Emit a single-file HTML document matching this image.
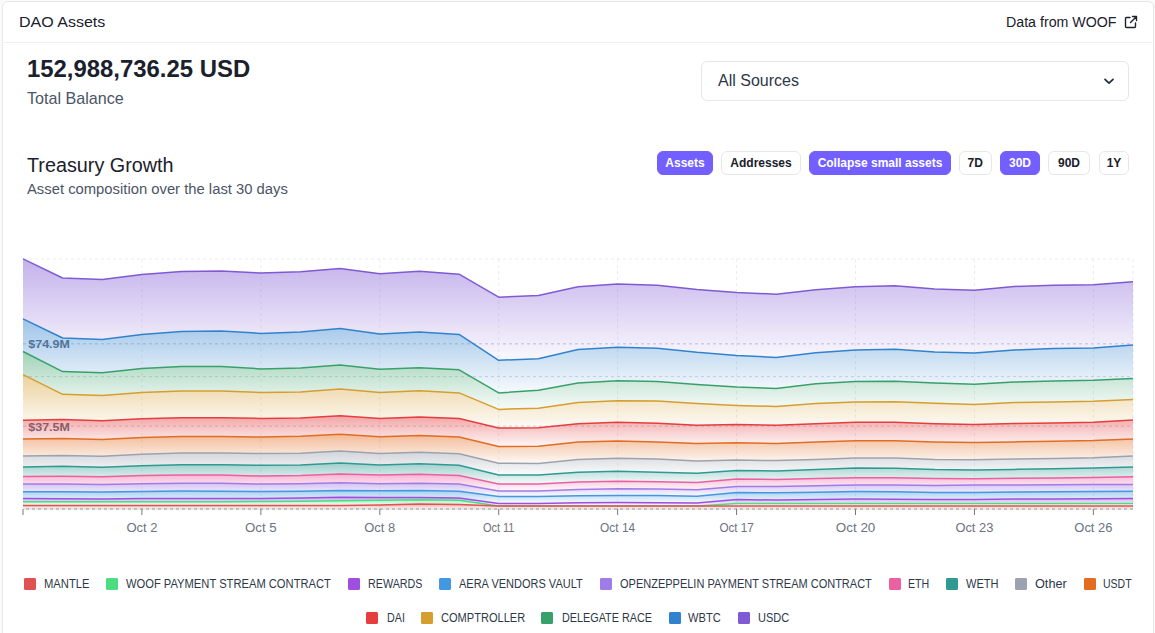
<!DOCTYPE html>
<html><head><meta charset="utf-8"><style>
*{box-sizing:border-box;margin:0;padding:0}
html,body{width:1155px;height:633px;overflow:hidden;background:#fafafa;font-family:"Liberation Sans",sans-serif;}
.card{position:absolute;left:2px;top:1px;width:1152px;height:700px;border:1px solid #e5e7eb;border-radius:6px;background:#fff}
.hdr{position:absolute;left:2px;top:42px;width:1152px;height:1px;background:#edf0f4}
.abs{position:absolute;white-space:nowrap}
.chart{position:absolute;left:0;top:0}
.btn{position:absolute;top:151px;height:24px;border-radius:6px;font-weight:bold;font-size:12px;line-height:22px;text-align:center;color:#1a202c;border:1px solid #e5e7eb;background:#fff}
.btn.on{background:#735fff;border-color:#735fff;color:#fff}
.sq{position:absolute;width:12px;height:12px;border-radius:2px}
.lt{position:absolute;font-size:12.5px;line-height:16px;color:#2d3748;transform-origin:0 0;white-space:nowrap}
</style></head><body>
<div class="card"></div>
<div class="hdr"></div>
<div class="abs" style="left:18.7px;top:12.9px;font-size:14.7px;line-height:18px;color:#1a202c;transform:scaleX(1.09);transform-origin:0 0">DAO Assets</div>
<div class="abs" style="left:1006.3px;top:14px;font-size:14px;line-height:17px;color:#1a202c;transform:scaleX(1.015);transform-origin:0 0">Data from WOOF</div>
<svg class="abs" style="left:1124px;top:15px" width="14" height="14" viewBox="0 0 14 14"><path d="M6 2.5H2.5a1 1 0 0 0-1 1v8a1 1 0 0 0 1 1h8a1 1 0 0 0 1-1V8" fill="none" stroke="#1a202c" stroke-width="1.4" stroke-linecap="round"/><path d="M8.5 1.5h4v4M12.5 1.5L6.5 7.5" fill="none" stroke="#1a202c" stroke-width="1.4" stroke-linecap="round" stroke-linejoin="round"/></svg>
<div class="abs" style="left:27px;top:55px;font-size:23.9px;line-height:28px;font-weight:bold;color:#1a202c">152,988,736.25 USD</div>
<div class="abs" style="left:27px;top:89px;font-size:16.1px;line-height:19px;color:#4a5568">Total Balance</div>
<div class="abs" style="left:701px;top:61px;width:428px;height:40px;border:1px solid #e5e7eb;border-radius:6px"></div>
<div class="abs" style="left:718px;top:71px;font-size:16px;line-height:19px;color:#2d3748">All Sources</div>
<svg class="abs" style="left:1103px;top:75px" width="12" height="12" viewBox="0 0 12 12"><path d="M2 4.4L6 8.2L10 4.4" fill="none" stroke="#1e293b" stroke-width="1.7" stroke-linecap="round" stroke-linejoin="round"/></svg>
<div class="abs" style="left:27.4px;top:154px;font-size:19.6px;line-height:22px;color:#1a202c;transform:scaleX(1.01);transform-origin:0 0">Treasury Growth</div>
<div class="abs" style="left:27.3px;top:181px;font-size:14.7px;line-height:17px;color:#4a5568;transform:scaleX(1.008);transform-origin:0 0">Asset composition over the last 30 days</div>
<div class="btn on" style="left:657px;width:56px">Assets</div>
<div class="btn" style="left:721px;width:80px">Addresses</div>
<div class="btn on" style="left:809px;width:142px">Collapse small assets</div>
<div class="btn" style="left:959px;width:32.5px">7D</div>
<div class="btn on" style="left:1000px;width:40px">30D</div>
<div class="btn" style="left:1048px;width:42px">90D</div>
<div class="btn" style="left:1099px;width:30px">1Y</div>
<svg class="chart" width="1155" height="633" viewBox="0 0 1155 633">
<defs><linearGradient id="g0" x1="0" y1="0" x2="0" y2="1"><stop offset="5%" stop-color="#e05252" stop-opacity="0.45"/><stop offset="95%" stop-color="#e05252" stop-opacity="0.06"/></linearGradient><linearGradient id="g1" x1="0" y1="0" x2="0" y2="1"><stop offset="5%" stop-color="#4ade80" stop-opacity="0.45"/><stop offset="95%" stop-color="#4ade80" stop-opacity="0.06"/></linearGradient><linearGradient id="g2" x1="0" y1="0" x2="0" y2="1"><stop offset="5%" stop-color="#9f4fe0" stop-opacity="0.45"/><stop offset="95%" stop-color="#9f4fe0" stop-opacity="0.06"/></linearGradient><linearGradient id="g3" x1="0" y1="0" x2="0" y2="1"><stop offset="5%" stop-color="#4299e1" stop-opacity="0.45"/><stop offset="95%" stop-color="#4299e1" stop-opacity="0.06"/></linearGradient><linearGradient id="g4" x1="0" y1="0" x2="0" y2="1"><stop offset="5%" stop-color="#a07ce8" stop-opacity="0.45"/><stop offset="95%" stop-color="#a07ce8" stop-opacity="0.06"/></linearGradient><linearGradient id="g5" x1="0" y1="0" x2="0" y2="1"><stop offset="5%" stop-color="#ec5fa0" stop-opacity="0.45"/><stop offset="95%" stop-color="#ec5fa0" stop-opacity="0.06"/></linearGradient><linearGradient id="g6" x1="0" y1="0" x2="0" y2="1"><stop offset="5%" stop-color="#2f9a92" stop-opacity="0.45"/><stop offset="95%" stop-color="#2f9a92" stop-opacity="0.06"/></linearGradient><linearGradient id="g7" x1="0" y1="0" x2="0" y2="1"><stop offset="5%" stop-color="#9ca3af" stop-opacity="0.45"/><stop offset="95%" stop-color="#9ca3af" stop-opacity="0.06"/></linearGradient><linearGradient id="g8" x1="0" y1="0" x2="0" y2="1"><stop offset="5%" stop-color="#e36c20" stop-opacity="0.45"/><stop offset="95%" stop-color="#e36c20" stop-opacity="0.06"/></linearGradient><linearGradient id="g9" x1="0" y1="0" x2="0" y2="1"><stop offset="5%" stop-color="#e53e3e" stop-opacity="0.45"/><stop offset="95%" stop-color="#e53e3e" stop-opacity="0.06"/></linearGradient><linearGradient id="g10" x1="0" y1="0" x2="0" y2="1"><stop offset="5%" stop-color="#d69e2e" stop-opacity="0.45"/><stop offset="95%" stop-color="#d69e2e" stop-opacity="0.06"/></linearGradient><linearGradient id="g11" x1="0" y1="0" x2="0" y2="1"><stop offset="5%" stop-color="#38a169" stop-opacity="0.45"/><stop offset="95%" stop-color="#38a169" stop-opacity="0.06"/></linearGradient><linearGradient id="g12" x1="0" y1="0" x2="0" y2="1"><stop offset="5%" stop-color="#3182ce" stop-opacity="0.45"/><stop offset="95%" stop-color="#3182ce" stop-opacity="0.06"/></linearGradient><linearGradient id="g13" x1="0" y1="0" x2="0" y2="1"><stop offset="5%" stop-color="#805ad5" stop-opacity="0.45"/><stop offset="95%" stop-color="#805ad5" stop-opacity="0.06"/></linearGradient></defs>
<g><line x1="23" y1="259" x2="1133" y2="259" stroke="#ebebee" stroke-width="1.2" stroke-dasharray="3 3"/><line x1="23" y1="343.8" x2="1133" y2="343.8" stroke="#d6d8e8" stroke-width="1.5" stroke-dasharray="3 3"/><line x1="23" y1="376.6" x2="1133" y2="376.6" stroke="#d6d8e8" stroke-width="1.0" stroke-dasharray="3 3"/><line x1="23" y1="426.2" x2="1133" y2="426.2" stroke="#d6d8e8" stroke-width="1.2" stroke-dasharray="3 3"/><line x1="141.93" y1="259" x2="141.93" y2="509" stroke="#ececec" stroke-width="1" stroke-dasharray="3 3"/><line x1="260.86" y1="259" x2="260.86" y2="509" stroke="#ececec" stroke-width="1" stroke-dasharray="3 3"/><line x1="379.79" y1="259" x2="379.79" y2="509" stroke="#ececec" stroke-width="1" stroke-dasharray="3 3"/><line x1="498.71" y1="259" x2="498.71" y2="509" stroke="#ececec" stroke-width="1" stroke-dasharray="3 3"/><line x1="617.64" y1="259" x2="617.64" y2="509" stroke="#ececec" stroke-width="1" stroke-dasharray="3 3"/><line x1="736.57" y1="259" x2="736.57" y2="509" stroke="#ececec" stroke-width="1" stroke-dasharray="3 3"/><line x1="855.50" y1="259" x2="855.50" y2="509" stroke="#ececec" stroke-width="1" stroke-dasharray="3 3"/><line x1="974.43" y1="259" x2="974.43" y2="509" stroke="#ececec" stroke-width="1" stroke-dasharray="3 3"/><line x1="1093.36" y1="259" x2="1093.36" y2="509" stroke="#ececec" stroke-width="1" stroke-dasharray="3 3"/><line x1="1133.00" y1="259" x2="1133.00" y2="509" stroke="#ececec" stroke-width="1" stroke-dasharray="3 3"/></g>
<g font-family="Liberation Sans, sans-serif" font-size="11.5" font-weight="bold" fill="#5f6b7d" fill-opacity="1"><text x="28.3" y="348" textLength="41.5" lengthAdjust="spacingAndGlyphs">$74.9M</text><text x="28.3" y="431" textLength="41.5" lengthAdjust="spacingAndGlyphs">$37.5M</text></g>
<g><polygon points="23.0,505.4 62.6,505.4 102.3,505.4 141.9,505.4 181.6,505.4 221.2,505.4 260.9,505.4 300.5,505.4 340.1,505.4 379.8,505.0 419.4,504.1 459.1,504.4 498.7,506.0 538.4,506.0 578.0,506.0 617.6,506.0 657.3,506.0 696.9,506.0 736.6,506.0 776.2,506.0 815.9,506.0 855.5,506.0 895.1,506.0 934.8,506.0 974.4,506.0 1014.1,506.0 1053.7,506.0 1093.4,506.0 1133.0,506.0 1133.0,509.0 1093.4,509.0 1053.7,509.0 1014.1,509.0 974.4,509.0 934.8,509.0 895.1,509.0 855.5,509.0 815.9,509.0 776.2,509.0 736.6,509.0 696.9,509.0 657.3,509.0 617.6,509.0 578.0,509.0 538.4,509.0 498.7,509.0 459.1,509.0 419.4,509.0 379.8,509.0 340.1,509.0 300.5,509.0 260.9,509.0 221.2,509.0 181.6,509.0 141.9,509.0 102.3,509.0 62.6,509.0 23.0,509.0" fill="url(#g0)"/><polygon points="23.0,501.8 62.6,501.8 102.3,501.8 141.9,501.8 181.6,501.8 221.2,501.8 260.9,501.5 300.5,501.2 340.1,500.8 379.8,500.3 419.4,499.7 459.1,500.2 498.7,506.0 538.4,506.0 578.0,506.0 617.6,506.0 657.3,506.0 696.9,506.0 736.6,503.6 776.2,503.6 815.9,503.6 855.5,503.6 895.1,503.6 934.8,503.6 974.4,503.6 1014.1,503.6 1053.7,503.6 1093.4,503.6 1133.0,503.6 1133.0,506.0 1093.4,506.0 1053.7,506.0 1014.1,506.0 974.4,506.0 934.8,506.0 895.1,506.0 855.5,506.0 815.9,506.0 776.2,506.0 736.6,506.0 696.9,506.0 657.3,506.0 617.6,506.0 578.0,506.0 538.4,506.0 498.7,506.0 459.1,504.4 419.4,504.1 379.8,505.0 340.1,505.4 300.5,505.4 260.9,505.4 221.2,505.4 181.6,505.4 141.9,505.4 102.3,505.4 62.6,505.4 23.0,505.4" fill="url(#g1)"/><polygon points="23.0,498.6 62.6,498.7 102.3,499.0 141.9,498.6 181.6,498.4 221.2,498.6 260.9,498.4 300.5,498.0 340.1,497.3 379.8,497.5 419.4,497.5 459.1,498.1 498.7,503.4 538.4,503.4 578.0,502.7 617.6,502.5 657.3,502.7 696.9,503.1 736.6,499.6 776.2,500.0 815.9,499.6 855.5,499.0 895.1,499.2 934.8,499.5 974.4,499.4 1014.1,499.1 1053.7,498.9 1093.4,498.8 1133.0,498.6 1133.0,503.6 1093.4,503.6 1053.7,503.6 1014.1,503.6 974.4,503.6 934.8,503.6 895.1,503.6 855.5,503.6 815.9,503.6 776.2,503.6 736.6,503.6 696.9,506.0 657.3,506.0 617.6,506.0 578.0,506.0 538.4,506.0 498.7,506.0 459.1,500.2 419.4,499.7 379.8,500.3 340.1,500.8 300.5,501.2 260.9,501.5 221.2,501.8 181.6,501.8 141.9,501.8 102.3,501.8 62.6,501.8 23.0,501.8" fill="url(#g2)"/><polygon points="23.0,491.7 62.6,491.8 102.3,492.1 141.9,491.5 181.6,491.1 221.2,491.3 260.9,491.6 300.5,491.2 340.1,490.5 379.8,490.8 419.4,490.5 459.1,491.2 498.7,496.4 538.4,496.4 578.0,495.8 617.6,495.4 657.3,495.6 696.9,496.2 736.6,492.5 776.2,492.7 815.9,492.2 855.5,491.6 895.1,491.8 934.8,492.4 974.4,492.4 1014.1,492.0 1053.7,491.8 1093.4,491.5 1133.0,491.3 1133.0,498.6 1093.4,498.8 1053.7,498.9 1014.1,499.1 974.4,499.4 934.8,499.5 895.1,499.2 855.5,499.0 815.9,499.6 776.2,500.0 736.6,499.6 696.9,503.1 657.3,502.7 617.6,502.5 578.0,502.7 538.4,503.4 498.7,503.4 459.1,498.1 419.4,497.5 379.8,497.5 340.1,497.3 300.5,498.0 260.9,498.4 221.2,498.6 181.6,498.4 141.9,498.6 102.3,499.0 62.6,498.7 23.0,498.6" fill="url(#g3)"/><polygon points="23.0,484.1 62.6,484.0 102.3,484.5 141.9,483.7 181.6,483.2 221.2,483.3 260.9,484.0 300.5,483.7 340.1,482.8 379.8,483.7 419.4,483.3 459.1,483.9 498.7,490.9 538.4,490.9 578.0,489.4 617.6,488.8 657.3,489.1 696.9,489.8 736.6,486.4 776.2,486.6 815.9,485.8 855.5,485.0 895.1,485.0 934.8,485.6 974.4,485.1 1014.1,484.9 1053.7,484.8 1093.4,484.6 1133.0,484.5 1133.0,491.3 1093.4,491.5 1053.7,491.8 1014.1,492.0 974.4,492.4 934.8,492.4 895.1,491.8 855.5,491.6 815.9,492.2 776.2,492.7 736.6,492.5 696.9,496.2 657.3,495.6 617.6,495.4 578.0,495.8 538.4,496.4 498.7,496.4 459.1,491.2 419.4,490.5 379.8,490.8 340.1,490.5 300.5,491.2 260.9,491.6 221.2,491.3 181.6,491.1 141.9,491.5 102.3,492.1 62.6,491.8 23.0,491.7" fill="url(#g4)"/><polygon points="23.0,476.4 62.6,476.2 102.3,476.8 141.9,475.6 181.6,474.9 221.2,475.1 260.9,476.0 300.5,475.6 340.1,473.9 379.8,474.9 419.4,474.3 459.1,475.6 498.7,484.1 538.4,483.9 578.0,482.0 617.6,481.3 657.3,481.7 696.9,482.4 736.6,479.0 776.2,479.4 815.9,478.6 855.5,477.7 895.1,477.7 934.8,478.6 974.4,478.7 1014.1,478.3 1053.7,477.9 1093.4,477.5 1133.0,476.8 1133.0,484.5 1093.4,484.6 1053.7,484.8 1014.1,484.9 974.4,485.1 934.8,485.6 895.1,485.0 855.5,485.0 815.9,485.8 776.2,486.6 736.6,486.4 696.9,489.8 657.3,489.1 617.6,488.8 578.0,489.4 538.4,490.9 498.7,490.9 459.1,483.9 419.4,483.3 379.8,483.7 340.1,482.8 300.5,483.7 260.9,484.0 221.2,483.3 181.6,483.2 141.9,483.7 102.3,484.5 62.6,484.0 23.0,484.1" fill="url(#g5)"/><polygon points="23.0,467.0 62.6,466.3 102.3,467.3 141.9,465.8 181.6,464.8 221.2,464.8 260.9,465.3 300.5,464.9 340.1,463.0 379.8,464.9 419.4,463.8 459.1,465.3 498.7,474.9 538.4,474.9 578.0,472.2 617.6,471.3 657.3,472.2 696.9,473.2 736.6,470.5 776.2,470.9 815.9,469.6 855.5,468.1 895.1,468.3 934.8,469.6 974.4,470.0 1014.1,469.4 1053.7,468.7 1093.4,468.1 1133.0,467.0 1133.0,476.8 1093.4,477.5 1053.7,477.9 1014.1,478.3 974.4,478.7 934.8,478.6 895.1,477.7 855.5,477.7 815.9,478.6 776.2,479.4 736.6,479.0 696.9,482.4 657.3,481.7 617.6,481.3 578.0,482.0 538.4,483.9 498.7,484.1 459.1,475.6 419.4,474.3 379.8,474.9 340.1,473.9 300.5,475.6 260.9,476.0 221.2,475.1 181.6,474.9 141.9,475.6 102.3,476.8 62.6,476.2 23.0,476.4" fill="url(#g6)"/><polygon points="23.0,456.0 62.6,455.5 102.3,456.3 141.9,454.3 181.6,453.1 221.2,453.1 260.9,453.6 300.5,453.2 340.1,451.0 379.8,453.6 419.4,452.3 459.1,453.8 498.7,463.2 538.4,463.6 578.0,459.4 617.6,458.3 657.3,458.9 696.9,461.1 736.6,460.0 776.2,460.6 815.9,459.4 855.5,457.9 895.1,457.9 934.8,459.4 974.4,459.8 1014.1,459.1 1053.7,458.5 1093.4,457.8 1133.0,456.1 1133.0,467.0 1093.4,468.1 1053.7,468.7 1014.1,469.4 974.4,470.0 934.8,469.6 895.1,468.3 855.5,468.1 815.9,469.6 776.2,470.9 736.6,470.5 696.9,473.2 657.3,472.2 617.6,471.3 578.0,472.2 538.4,474.9 498.7,474.9 459.1,465.3 419.4,463.8 379.8,464.9 340.1,463.0 300.5,464.9 260.9,465.3 221.2,464.8 181.6,464.8 141.9,465.8 102.3,467.3 62.6,466.3 23.0,467.0" fill="url(#g7)"/><polygon points="23.0,439.1 62.6,438.4 102.3,439.4 141.9,437.4 181.6,436.4 221.2,436.4 260.9,437.0 300.5,436.3 340.1,434.2 379.8,436.7 419.4,435.5 459.1,437.0 498.7,446.6 538.4,446.3 578.0,441.9 617.6,441.0 657.3,441.9 696.9,443.6 736.6,442.7 776.2,443.4 815.9,441.9 855.5,440.8 895.1,440.8 934.8,441.9 974.4,442.5 1014.1,441.9 1053.7,441.2 1093.4,440.6 1133.0,438.9 1133.0,456.1 1093.4,457.8 1053.7,458.5 1014.1,459.1 974.4,459.8 934.8,459.4 895.1,457.9 855.5,457.9 815.9,459.4 776.2,460.6 736.6,460.0 696.9,461.1 657.3,458.9 617.6,458.3 578.0,459.4 538.4,463.6 498.7,463.2 459.1,453.8 419.4,452.3 379.8,453.6 340.1,451.0 300.5,453.2 260.9,453.6 221.2,453.1 181.6,453.1 141.9,454.3 102.3,456.3 62.6,455.5 23.0,456.0" fill="url(#g8)"/><polygon points="23.0,420.2 62.6,419.5 102.3,420.7 141.9,418.8 181.6,417.8 221.2,417.8 260.9,418.4 300.5,418.0 340.1,415.8 379.8,418.4 419.4,416.9 459.1,418.6 498.7,428.0 538.4,427.8 578.0,423.7 617.6,422.2 657.3,423.3 696.9,425.2 736.6,424.4 776.2,425.2 815.9,423.7 855.5,422.2 895.1,422.2 934.8,423.7 974.4,424.4 1014.1,423.6 1053.7,423.0 1093.4,422.2 1133.0,420.1 1133.0,438.9 1093.4,440.6 1053.7,441.2 1014.1,441.9 974.4,442.5 934.8,441.9 895.1,440.8 855.5,440.8 815.9,441.9 776.2,443.4 736.6,442.7 696.9,443.6 657.3,441.9 617.6,441.0 578.0,441.9 538.4,446.3 498.7,446.6 459.1,437.0 419.4,435.5 379.8,436.7 340.1,434.2 300.5,436.3 260.9,437.0 221.2,436.4 181.6,436.4 141.9,437.4 102.3,439.4 62.6,438.4 23.0,439.1" fill="url(#g9)"/><polygon points="23.0,374.7 62.6,394.3 102.3,395.5 141.9,392.6 181.6,390.9 221.2,391.1 260.9,392.4 300.5,391.9 340.1,389.1 379.8,392.4 419.4,390.7 459.1,392.9 498.7,409.4 538.4,408.2 578.0,402.4 617.6,400.7 657.3,401.1 696.9,403.5 736.6,405.4 776.2,406.5 815.9,403.5 855.5,401.9 895.1,401.8 934.8,403.3 974.4,404.5 1014.1,402.6 1053.7,402.1 1093.4,401.3 1133.0,399.5 1133.0,420.1 1093.4,422.2 1053.7,423.0 1014.1,423.6 974.4,424.4 934.8,423.7 895.1,422.2 855.5,422.2 815.9,423.7 776.2,425.2 736.6,424.4 696.9,425.2 657.3,423.3 617.6,422.2 578.0,423.7 538.4,427.8 498.7,428.0 459.1,418.6 419.4,416.9 379.8,418.4 340.1,415.8 300.5,418.0 260.9,418.4 221.2,417.8 181.6,417.8 141.9,418.8 102.3,420.7 62.6,419.5 23.0,420.2" fill="url(#g10)"/><polygon points="23.0,351.5 62.6,371.6 102.3,372.8 141.9,368.5 181.6,366.5 221.2,366.5 260.9,368.9 300.5,368.0 340.1,364.9 379.8,369.3 419.4,367.8 459.1,369.8 498.7,392.9 538.4,390.3 578.0,383.1 617.6,380.8 657.3,381.4 696.9,384.4 736.6,387.0 776.2,388.5 815.9,383.7 855.5,381.6 895.1,381.2 934.8,383.1 974.4,384.3 1014.1,382.0 1053.7,380.9 1093.4,380.3 1133.0,378.5 1133.0,399.5 1093.4,401.3 1053.7,402.1 1014.1,402.6 974.4,404.5 934.8,403.3 895.1,401.8 855.5,401.9 815.9,403.5 776.2,406.5 736.6,405.4 696.9,403.5 657.3,401.1 617.6,400.7 578.0,402.4 538.4,408.2 498.7,409.4 459.1,392.9 419.4,390.7 379.8,392.4 340.1,389.1 300.5,391.9 260.9,392.4 221.2,391.1 181.6,390.9 141.9,392.6 102.3,395.5 62.6,394.3 23.0,374.7" fill="url(#g11)"/><polygon points="23.0,318.8 62.6,338.0 102.3,339.4 141.9,334.5 181.6,331.6 221.2,331.0 260.9,333.4 300.5,332.0 340.1,328.5 379.8,334.1 419.4,332.0 459.1,334.4 498.7,360.3 538.4,358.8 578.0,349.6 617.6,347.2 657.3,348.2 696.9,352.3 736.6,355.4 776.2,357.4 815.9,352.8 855.5,349.9 895.1,349.3 934.8,352.0 974.4,353.0 1014.1,350.0 1053.7,348.6 1093.4,348.1 1133.0,344.9 1133.0,378.5 1093.4,380.3 1053.7,380.9 1014.1,382.0 974.4,384.3 934.8,383.1 895.1,381.2 855.5,381.6 815.9,383.7 776.2,388.5 736.6,387.0 696.9,384.4 657.3,381.4 617.6,380.8 578.0,383.1 538.4,390.3 498.7,392.9 459.1,369.8 419.4,367.8 379.8,369.3 340.1,364.9 300.5,368.0 260.9,368.9 221.2,366.5 181.6,366.5 141.9,368.5 102.3,372.8 62.6,371.6 23.0,351.5" fill="url(#g12)"/><polygon points="23.0,258.9 62.6,278.0 102.3,279.5 141.9,274.4 181.6,271.5 221.2,271.0 260.9,273.0 300.5,271.8 340.1,268.4 379.8,273.8 419.4,271.3 459.1,274.2 498.7,297.2 538.4,295.6 578.0,286.8 617.6,283.9 657.3,285.2 696.9,289.5 736.6,292.4 776.2,294.3 815.9,289.7 855.5,286.8 895.1,285.7 934.8,288.9 974.4,290.3 1014.1,286.5 1053.7,285.2 1093.4,284.7 1133.0,281.7 1133.0,344.9 1093.4,348.1 1053.7,348.6 1014.1,350.0 974.4,353.0 934.8,352.0 895.1,349.3 855.5,349.9 815.9,352.8 776.2,357.4 736.6,355.4 696.9,352.3 657.3,348.2 617.6,347.2 578.0,349.6 538.4,358.8 498.7,360.3 459.1,334.4 419.4,332.0 379.8,334.1 340.1,328.5 300.5,332.0 260.9,333.4 221.2,331.0 181.6,331.6 141.9,334.5 102.3,339.4 62.6,338.0 23.0,318.8" fill="url(#g13)"/></g>
<g><polyline points="23.0,258.9 62.6,278.0 102.3,279.5 141.9,274.4 181.6,271.5 221.2,271.0 260.9,273.0 300.5,271.8 340.1,268.4 379.8,273.8 419.4,271.3 459.1,274.2 498.7,297.2 538.4,295.6 578.0,286.8 617.6,283.9 657.3,285.2 696.9,289.5 736.6,292.4 776.2,294.3 815.9,289.7 855.5,286.8 895.1,285.7 934.8,288.9 974.4,290.3 1014.1,286.5 1053.7,285.2 1093.4,284.7 1133.0,281.7" fill="none" stroke="#805ad5" stroke-width="1.5" stroke-linejoin="round"/><polyline points="23.0,318.8 62.6,338.0 102.3,339.4 141.9,334.5 181.6,331.6 221.2,331.0 260.9,333.4 300.5,332.0 340.1,328.5 379.8,334.1 419.4,332.0 459.1,334.4 498.7,360.3 538.4,358.8 578.0,349.6 617.6,347.2 657.3,348.2 696.9,352.3 736.6,355.4 776.2,357.4 815.9,352.8 855.5,349.9 895.1,349.3 934.8,352.0 974.4,353.0 1014.1,350.0 1053.7,348.6 1093.4,348.1 1133.0,344.9" fill="none" stroke="#3182ce" stroke-width="1.5" stroke-linejoin="round"/><polyline points="23.0,351.5 62.6,371.6 102.3,372.8 141.9,368.5 181.6,366.5 221.2,366.5 260.9,368.9 300.5,368.0 340.1,364.9 379.8,369.3 419.4,367.8 459.1,369.8 498.7,392.9 538.4,390.3 578.0,383.1 617.6,380.8 657.3,381.4 696.9,384.4 736.6,387.0 776.2,388.5 815.9,383.7 855.5,381.6 895.1,381.2 934.8,383.1 974.4,384.3 1014.1,382.0 1053.7,380.9 1093.4,380.3 1133.0,378.5" fill="none" stroke="#38a169" stroke-width="1.5" stroke-linejoin="round"/><polyline points="23.0,374.7 62.6,394.3 102.3,395.5 141.9,392.6 181.6,390.9 221.2,391.1 260.9,392.4 300.5,391.9 340.1,389.1 379.8,392.4 419.4,390.7 459.1,392.9 498.7,409.4 538.4,408.2 578.0,402.4 617.6,400.7 657.3,401.1 696.9,403.5 736.6,405.4 776.2,406.5 815.9,403.5 855.5,401.9 895.1,401.8 934.8,403.3 974.4,404.5 1014.1,402.6 1053.7,402.1 1093.4,401.3 1133.0,399.5" fill="none" stroke="#d69e2e" stroke-width="1.5" stroke-linejoin="round"/><polyline points="23.0,420.2 62.6,419.5 102.3,420.7 141.9,418.8 181.6,417.8 221.2,417.8 260.9,418.4 300.5,418.0 340.1,415.8 379.8,418.4 419.4,416.9 459.1,418.6 498.7,428.0 538.4,427.8 578.0,423.7 617.6,422.2 657.3,423.3 696.9,425.2 736.6,424.4 776.2,425.2 815.9,423.7 855.5,422.2 895.1,422.2 934.8,423.7 974.4,424.4 1014.1,423.6 1053.7,423.0 1093.4,422.2 1133.0,420.1" fill="none" stroke="#e53e3e" stroke-width="1.5" stroke-linejoin="round"/><polyline points="23.0,439.1 62.6,438.4 102.3,439.4 141.9,437.4 181.6,436.4 221.2,436.4 260.9,437.0 300.5,436.3 340.1,434.2 379.8,436.7 419.4,435.5 459.1,437.0 498.7,446.6 538.4,446.3 578.0,441.9 617.6,441.0 657.3,441.9 696.9,443.6 736.6,442.7 776.2,443.4 815.9,441.9 855.5,440.8 895.1,440.8 934.8,441.9 974.4,442.5 1014.1,441.9 1053.7,441.2 1093.4,440.6 1133.0,438.9" fill="none" stroke="#e36c20" stroke-width="1.5" stroke-linejoin="round"/><polyline points="23.0,456.0 62.6,455.5 102.3,456.3 141.9,454.3 181.6,453.1 221.2,453.1 260.9,453.6 300.5,453.2 340.1,451.0 379.8,453.6 419.4,452.3 459.1,453.8 498.7,463.2 538.4,463.6 578.0,459.4 617.6,458.3 657.3,458.9 696.9,461.1 736.6,460.0 776.2,460.6 815.9,459.4 855.5,457.9 895.1,457.9 934.8,459.4 974.4,459.8 1014.1,459.1 1053.7,458.5 1093.4,457.8 1133.0,456.1" fill="none" stroke="#9ca3af" stroke-width="1.5" stroke-linejoin="round"/><polyline points="23.0,467.0 62.6,466.3 102.3,467.3 141.9,465.8 181.6,464.8 221.2,464.8 260.9,465.3 300.5,464.9 340.1,463.0 379.8,464.9 419.4,463.8 459.1,465.3 498.7,474.9 538.4,474.9 578.0,472.2 617.6,471.3 657.3,472.2 696.9,473.2 736.6,470.5 776.2,470.9 815.9,469.6 855.5,468.1 895.1,468.3 934.8,469.6 974.4,470.0 1014.1,469.4 1053.7,468.7 1093.4,468.1 1133.0,467.0" fill="none" stroke="#2f9a92" stroke-width="1.5" stroke-linejoin="round"/><polyline points="23.0,476.4 62.6,476.2 102.3,476.8 141.9,475.6 181.6,474.9 221.2,475.1 260.9,476.0 300.5,475.6 340.1,473.9 379.8,474.9 419.4,474.3 459.1,475.6 498.7,484.1 538.4,483.9 578.0,482.0 617.6,481.3 657.3,481.7 696.9,482.4 736.6,479.0 776.2,479.4 815.9,478.6 855.5,477.7 895.1,477.7 934.8,478.6 974.4,478.7 1014.1,478.3 1053.7,477.9 1093.4,477.5 1133.0,476.8" fill="none" stroke="#ec5fa0" stroke-width="1.5" stroke-linejoin="round"/><polyline points="23.0,484.1 62.6,484.0 102.3,484.5 141.9,483.7 181.6,483.2 221.2,483.3 260.9,484.0 300.5,483.7 340.1,482.8 379.8,483.7 419.4,483.3 459.1,483.9 498.7,490.9 538.4,490.9 578.0,489.4 617.6,488.8 657.3,489.1 696.9,489.8 736.6,486.4 776.2,486.6 815.9,485.8 855.5,485.0 895.1,485.0 934.8,485.6 974.4,485.1 1014.1,484.9 1053.7,484.8 1093.4,484.6 1133.0,484.5" fill="none" stroke="#a07ce8" stroke-width="1.5" stroke-linejoin="round"/><polyline points="23.0,491.7 62.6,491.8 102.3,492.1 141.9,491.5 181.6,491.1 221.2,491.3 260.9,491.6 300.5,491.2 340.1,490.5 379.8,490.8 419.4,490.5 459.1,491.2 498.7,496.4 538.4,496.4 578.0,495.8 617.6,495.4 657.3,495.6 696.9,496.2 736.6,492.5 776.2,492.7 815.9,492.2 855.5,491.6 895.1,491.8 934.8,492.4 974.4,492.4 1014.1,492.0 1053.7,491.8 1093.4,491.5 1133.0,491.3" fill="none" stroke="#4299e1" stroke-width="1.5" stroke-linejoin="round"/><polyline points="23.0,498.6 62.6,498.7 102.3,499.0 141.9,498.6 181.6,498.4 221.2,498.6 260.9,498.4 300.5,498.0 340.1,497.3 379.8,497.5 419.4,497.5 459.1,498.1 498.7,503.4 538.4,503.4 578.0,502.7 617.6,502.5 657.3,502.7 696.9,503.1 736.6,499.6 776.2,500.0 815.9,499.6 855.5,499.0 895.1,499.2 934.8,499.5 974.4,499.4 1014.1,499.1 1053.7,498.9 1093.4,498.8 1133.0,498.6" fill="none" stroke="#9f4fe0" stroke-width="1.5" stroke-linejoin="round"/><polyline points="23.0,501.8 62.6,501.8 102.3,501.8 141.9,501.8 181.6,501.8 221.2,501.8 260.9,501.5 300.5,501.2 340.1,500.8 379.8,500.3 419.4,499.7 459.1,500.2 498.7,506.0 538.4,506.0 578.0,506.0 617.6,506.0 657.3,506.0 696.9,506.0 736.6,503.6 776.2,503.6 815.9,503.6 855.5,503.6 895.1,503.6 934.8,503.6 974.4,503.6 1014.1,503.6 1053.7,503.6 1093.4,503.6 1133.0,503.6" fill="none" stroke="#4ade80" stroke-width="1.5" stroke-linejoin="round"/><polyline points="23.0,505.4 62.6,505.4 102.3,505.4 141.9,505.4 181.6,505.4 221.2,505.4 260.9,505.4 300.5,505.4 340.1,505.4 379.8,505.0 419.4,504.1 459.1,504.4 498.7,506.0 538.4,506.0 578.0,506.0 617.6,506.0 657.3,506.0 696.9,506.0 736.6,506.0 776.2,506.0 815.9,506.0 855.5,506.0 895.1,506.0 934.8,506.0 974.4,506.0 1014.1,506.0 1053.7,506.0 1093.4,506.0 1133.0,506.0" fill="none" stroke="#e05252" stroke-width="1.5" stroke-linejoin="round"/></g>
<g><line x1="23" y1="509" x2="1133" y2="509" stroke="#d9d9d9" stroke-width="1"/><line x1="23" y1="509" x2="1133" y2="509" stroke="#999999" stroke-width="1" stroke-dasharray="3 3" stroke-dashoffset="-3"/><line x1="23.00" y1="509" x2="23.00" y2="515" stroke="#777" stroke-width="1"/><line x1="141.93" y1="509" x2="141.93" y2="515" stroke="#777" stroke-width="1"/><line x1="260.86" y1="509" x2="260.86" y2="515" stroke="#777" stroke-width="1"/><line x1="379.79" y1="509" x2="379.79" y2="515" stroke="#777" stroke-width="1"/><line x1="498.71" y1="509" x2="498.71" y2="515" stroke="#777" stroke-width="1"/><line x1="617.64" y1="509" x2="617.64" y2="515" stroke="#777" stroke-width="1"/><line x1="736.57" y1="509" x2="736.57" y2="515" stroke="#777" stroke-width="1"/><line x1="855.50" y1="509" x2="855.50" y2="515" stroke="#777" stroke-width="1"/><line x1="974.43" y1="509" x2="974.43" y2="515" stroke="#777" stroke-width="1"/><line x1="1093.36" y1="509" x2="1093.36" y2="515" stroke="#777" stroke-width="1"/></g>
<g font-family="Liberation Sans, sans-serif" font-size="12.5" fill="#6b7280"><text x="126.4" y="532" textLength="31.1" lengthAdjust="spacingAndGlyphs">Oct 2</text><text x="245.0" y="532" textLength="31.7" lengthAdjust="spacingAndGlyphs">Oct 5</text><text x="364.3" y="532" textLength="30.9" lengthAdjust="spacingAndGlyphs">Oct 8</text><text x="482.9" y="532" textLength="31.6" lengthAdjust="spacingAndGlyphs">Oct 11</text><text x="600.1" y="532" textLength="35.1" lengthAdjust="spacingAndGlyphs">Oct 14</text><text x="719.4" y="532" textLength="34.4" lengthAdjust="spacingAndGlyphs">Oct 17</text><text x="835.8" y="532" textLength="39.5" lengthAdjust="spacingAndGlyphs">Oct 20</text><text x="955.4" y="532" textLength="38.0" lengthAdjust="spacingAndGlyphs">Oct 23</text><text x="1074.3" y="532" textLength="38.2" lengthAdjust="spacingAndGlyphs">Oct 26</text></g>
</svg>
<div class="sq" style="left:24.0px;top:578px;background:#e05252;box-shadow:inset 0 0 0 1px #e05252"></div><div class="lt" style="left:43.9px;top:575.5px;transform:scaleX(0.897)">MANTLE</div><div class="sq" style="left:106.0px;top:578px;background:#4ade80;box-shadow:inset 0 0 0 1px #4ade80"></div><div class="lt" style="left:126.4px;top:575.5px;transform:scaleX(0.894)">WOOF PAYMENT STREAM CONTRACT</div><div class="sq" style="left:347.7px;top:578px;background:#9f4fe0;box-shadow:inset 0 0 0 1px #9f4fe0"></div><div class="lt" style="left:367.7px;top:575.5px;transform:scaleX(0.859)">REWARDS</div><div class="sq" style="left:439.1px;top:578px;background:#4299e1;box-shadow:inset 0 0 0 1px #4299e1"></div><div class="lt" style="left:459.0px;top:575.5px;transform:scaleX(0.880)">AERA VENDORS VAULT</div><div class="sq" style="left:599.9px;top:578px;background:#a07ce8;box-shadow:inset 0 0 0 1px #a07ce8"></div><div class="lt" style="left:619.5px;top:575.5px;transform:scaleX(0.880)">OPENZEPPELIN PAYMENT STREAM CONTRACT</div><div class="sq" style="left:888.5px;top:578px;background:#ec5fa0;box-shadow:inset 0 0 0 1px #ec5fa0"></div><div class="lt" style="left:908.2px;top:575.5px;transform:scaleX(0.852)">ETH</div><div class="sq" style="left:946.2px;top:578px;background:#2f9a92;box-shadow:inset 0 0 0 1px #2f9a92"></div><div class="lt" style="left:966.0px;top:575.5px;transform:scaleX(0.886)">WETH</div><div class="sq" style="left:1015.3px;top:578px;background:#9ca3af;box-shadow:inset 0 0 0 1px #9ca3af"></div><div class="lt" style="left:1035.0px;top:575.5px;transform:scaleX(1.014)">Other</div><div class="sq" style="left:1083.5px;top:578px;background:#e36c20;box-shadow:inset 0 0 0 1px #e36c20"></div><div class="lt" style="left:1103.2px;top:575.5px;transform:scaleX(0.841)">USDT</div><div class="sq" style="left:365.7px;top:611.7px;background:#e53e3e;box-shadow:inset 0 0 0 1px #e53e3e"></div><div class="lt" style="left:386.7px;top:610.3px;transform:scaleX(0.859)">DAI</div><div class="sq" style="left:421.0px;top:611.7px;background:#d69e2e;box-shadow:inset 0 0 0 1px #d69e2e"></div><div class="lt" style="left:441.1px;top:610.3px;transform:scaleX(0.885)">COMPTROLLER</div><div class="sq" style="left:541.3px;top:611.7px;background:#38a169;box-shadow:inset 0 0 0 1px #38a169"></div><div class="lt" style="left:561.9px;top:610.3px;transform:scaleX(0.865)">DELEGATE RACE</div><div class="sq" style="left:668.6px;top:611.7px;background:#3182ce;box-shadow:inset 0 0 0 1px #3182ce"></div><div class="lt" style="left:688.4px;top:610.3px;transform:scaleX(0.889)">WBTC</div><div class="sq" style="left:738.3px;top:611.7px;background:#805ad5;box-shadow:inset 0 0 0 1px #805ad5"></div><div class="lt" style="left:758.1px;top:610.3px;transform:scaleX(0.881)">USDC</div>
</body></html>
